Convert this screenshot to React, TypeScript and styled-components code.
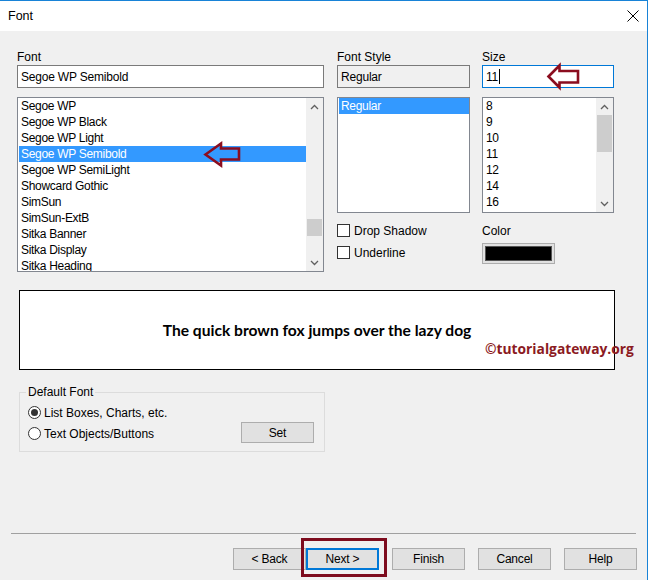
import React from "react";
import styled, { createGlobalStyle } from "styled-components";

const GlobalStyle = createGlobalStyle`
  html, body { margin: 0; padding: 0; background: #fff; }
  body { font-family: "Liberation Sans", Arial, sans-serif; font-size: 12px; color: #000; }
  * { box-sizing: border-box; }
`;

const Window = styled.div`
  width: 648px;
  height: 580px;
  border-top: 1px solid #1883d7;
  border-right: 1px solid #1883d7;
  background: #f0f0f0;
  display: flex;
  flex-direction: column;
  overflow: hidden;
`;

const TitleBar = styled.div`
  height: 30px;
  flex: none;
  background: #fff;
  display: flex;
  align-items: center;
  justify-content: space-between;
  padding: 0 8px 0 8px;
  font-size: 12.5px;
`;

const Main = styled.div`
  padding: 18px 0 0 17px;
  display: flex;
  flex-direction: column;
`;

const TopRow = styled.div`
  display: grid;
  grid-template-columns: 307px 133px 131px;
  column-gap: 13px;
  align-items: start;
`;

const Column = styled.div<{ $shift?: number }>`
  display: flex;
  flex-direction: column;
  margin-left: ${(p) => p.$shift ?? 0}px;
`;

const FieldLabel = styled.div<{ $gap?: number }>`
  height: 16px;
  line-height: 16px;
  margin-top: ${(p) => p.$gap ?? 0}px;
`;

const FieldWrap = styled.div`
  position: relative;
`;

const TextBox = styled.div<{ $focused?: boolean; $readOnly?: boolean }>`
  height: 23px;
  border: 1px solid ${(p) => (p.$focused ? "#0078d7" : "#7a7a7a")};
  background: ${(p) => (p.$readOnly ? "#f0f0f0" : "#fff")};
  padding: 0 3px;
  display: flex;
  align-items: center;
  letter-spacing: -0.2px;
`;

const Caret = styled.span`
  display: inline-block;
  width: 1px;
  height: 15px;
  background: #000;
  margin-left: 1px;
`;

const ListBox = styled.div<{ $height: number }>`
  position: relative;
  margin-top: 9px;
  height: ${(p) => p.$height}px;
  border: 1px solid #828790;
  background: #fff;
  display: flex;
`;

const ListItems = styled.div`
  flex: 1;
  padding-left: 1px;
  overflow: hidden;
`;

const ListItem = styled.div<{ $selected?: boolean }>`
  height: 16px;
  line-height: 16px;
  padding-left: 2px;
  white-space: nowrap;
  letter-spacing: -0.3px;
  background: ${(p) => (p.$selected ? "#3399ff" : "transparent")};
  color: ${(p) => (p.$selected ? "#fff" : "#000")};
`;

const ScrollBar = styled.div`
  width: 17px;
  flex: none;
  background: #f0f0f0;
  display: flex;
  flex-direction: column;
`;

const ScrollArrow = styled.div`
  height: 17px;
  flex: none;
  display: flex;
  align-items: center;
  justify-content: center;
`;

const Track = styled.div`
  flex: 1;
`;

const Thumb = styled.div<{ $top: number; $height: number }>`
  margin: ${(p) => p.$top}px 1px 0 1px;
  height: ${(p) => p.$height}px;
  background: #cdcdcd;
`;

const CheckRow = styled.div<{ $gap: number }>`
  display: flex;
  align-items: center;
  gap: 4px;
  height: 13px;
  margin-top: ${(p) => p.$gap}px;
`;

const CheckBox = styled.span`
  width: 13px;
  height: 13px;
  border: 1px solid #333;
  background: #fff;
  flex: none;
`;

const ColorSwatch = styled.div`
  margin-top: 4px;
  width: 73px;
  height: 21px;
  border: 1px solid #adadad;
  background: #e1e1e1;
  padding: 2px;
`;

const ColorFill = styled.div`
  width: 100%;
  height: 100%;
  background: #000;
  border: 1px solid #555;
`;

const Preview = styled.div`
  position: relative;
  margin: 18px 0 0 2px;
  width: 596px;
  height: 80px;
  border: 1px solid #000;
  background: #fff;
  display: flex;
  align-items: center;
  justify-content: center;
`;

const SampleText = styled.span`
  font-family: Lato, "Open Sans", sans-serif;
  font-weight: 700;
  font-size: 15.6px;
`;

const Watermark = styled.span`
  position: absolute;
  left: 465px;
  top: 48px;
  font-family: "Open Sans", sans-serif;
  font-weight: 700;
  font-size: 13.8px;
  color: #8b1a22;
  white-space: nowrap;
`;

const GroupBox = styled.fieldset`
  margin: 15px 0 0 2px;
  width: 306px;
  border: 1px solid #dcdcdc;
  padding: 0 10px 7px 8px;
`;

const GroupLegend = styled.legend`
  padding: 0 2px;
  margin-left: -2px;
  line-height: 14px;
`;

const GroupGrid = styled.div`
  margin-top: 3px;
  display: grid;
  grid-template-columns: 1fr 73px;
  grid-template-rows: 21px 21px;
`;

const RadioRow = styled.label<{ $row: number }>`
  grid-column: 1;
  grid-row: ${(p) => p.$row};
  display: flex;
  align-items: center;
  gap: 3px;
`;

const Radio = styled.span<{ $checked?: boolean }>`
  width: 13px;
  height: 13px;
  border-radius: 50%;
  border: 1px solid #333;
  background: #fff;
  display: flex;
  align-items: center;
  justify-content: center;
  flex: none;
  &::after {
    content: "";
    width: 7px;
    height: 7px;
    border-radius: 50%;
    background: ${(p) => (p.$checked ? "#333" : "transparent")};
  }
`;

const Button = styled.button<{ $primary?: boolean }>`
  width: 73px;
  height: 22px;
  padding: 0;
  font-family: "Liberation Sans", Arial, sans-serif;
  font-size: 12px;
  color: #000;
  background: #e1e1e1;
  border: ${(p) => (p.$primary ? "2px solid #0078d7" : "1px solid #adadad")};
  letter-spacing: -0.2px;
`;

const SetButton = styled(Button)`
  grid-column: 2;
  grid-row: 2;
  height: 21px;
  margin-top: -1px;
`;

const Footer = styled.div`
  margin-top: auto;
  display: flex;
  flex-direction: column;
`;

const Separator = styled.div`
  height: 1px;
  margin: 0 11px;
  background: #a0a0a0;
`;

const ButtonRow = styled.div`
  margin: 14px 0 10px;
  padding-right: 10px;
  display: flex;
  justify-content: flex-end;
  gap: 13px;
`;

const ButtonPair = styled.div`
  display: flex;
`;

const HighlightWrap = styled.div`
  position: relative;
  display: flex;
`;

const Highlight = styled.div`
  position: absolute;
  left: -5px;
  top: -10px;
  right: -8px;
  bottom: -7px;
  border: 3px solid #7d0c1e;
  pointer-events: none;
`;

const ArrowMark = styled.svg<{ $left: number; $top: number }>`
  position: absolute;
  left: ${(p) => p.$left}px;
  top: ${(p) => p.$top}px;
  overflow: visible;
`;

const Up = () => (
  <svg width="9" height="6" viewBox="0 0 9 6">
    <polyline points="1,5 4.5,1.5 8,5" fill="none" stroke="#606060" strokeWidth="1.3" />
  </svg>
);
const Down = () => (
  <svg width="9" height="6" viewBox="0 0 9 6">
    <polyline points="1,1 4.5,4.5 8,1" fill="none" stroke="#606060" strokeWidth="1.3" />
  </svg>
);

const Scroll = ({ top, height }: { top: number; height: number }) => (
  <ScrollBar>
    <ScrollArrow>
      <Up />
    </ScrollArrow>
    <Track>
      <Thumb $top={top} $height={height} />
    </Track>
    <ScrollArrow>
      <Down />
    </ScrollArrow>
  </ScrollBar>
);

const fonts = [
  "Segoe WP",
  "Segoe WP Black",
  "Segoe WP Light",
  "Segoe WP Semibold",
  "Segoe WP SemiLight",
  "Showcard Gothic",
  "SimSun",
  "SimSun-ExtB",
  "Sitka Banner",
  "Sitka Display",
  "Sitka Heading",
];
const sizes = ["8", "9", "10", "11", "12", "14", "16"];

export default function App() {
  return (
    <>
      <GlobalStyle />
      <Window>
        <TitleBar>
          <span>Font</span>
          <svg width="12" height="12" viewBox="0 0 12 12">
            <path d="M0.5 0.5 L11.5 11.5 M11.5 0.5 L0.5 11.5" stroke="#000" strokeWidth="1" />
          </svg>
        </TitleBar>
        <Main>
          <TopRow>
            <Column>
              <FieldLabel>Font</FieldLabel>
              <TextBox>Segoe WP Semibold</TextBox>
              <ListBox $height={175}>
                <ListItems>
                  {fonts.map((f) => (
                    <ListItem key={f} $selected={f === "Segoe WP Semibold"}>
                      {f}
                    </ListItem>
                  ))}
                </ListItems>
                <Scroll top={104} height={17} />
                <ArrowMark $left={186} $top={44} width="37" height="25" viewBox="0 0 37 25">
                  <polygon
                    points="1.5,12.5 17,1.5 17,6.5 35,6.5 35,17.5 17,17.5 17,23.5"
                    fill="none"
                    stroke="#8b0d1f"
                    strokeWidth="2.6"
                    strokeLinejoin="miter"
                  />
                </ArrowMark>
              </ListBox>
            </Column>
            <Column>
              <FieldLabel>Font Style</FieldLabel>
              <TextBox $readOnly>Regular</TextBox>
              <ListBox $height={116}>
                <ListItems>
                  <ListItem $selected>Regular</ListItem>
                </ListItems>
              </ListBox>
              <CheckRow $gap={11}>
                <CheckBox />
                <span>Drop Shadow</span>
              </CheckRow>
              <CheckRow $gap={9}>
                <CheckBox />
                <span>Underline</span>
              </CheckRow>
            </Column>
            <Column $shift={-1}>
              <FieldLabel>Size</FieldLabel>
              <FieldWrap>
                <TextBox $focused>
                  11
                  <Caret />
                </TextBox>
                <ArrowMark $left={65} $top={-1} width="33" height="25" viewBox="0 0 33 25">
                  <polygon
                    points="1.5,12.5 12.5,1.5 12.5,7 31,7 31,18.5 12.5,18.5 12.5,23.5"
                    fill="none"
                    stroke="#8b0d1f"
                    strokeWidth="2.6"
                  />
                </ArrowMark>
              </FieldWrap>
              <ListBox $height={116}>
                <ListItems>
                  {sizes.map((s) => (
                    <ListItem key={s}>{s}</ListItem>
                  ))}
                </ListItems>
                <Scroll top={0} height={37} />
              </ListBox>
              <FieldLabel $gap={10}>Color</FieldLabel>
              <ColorSwatch>
                <ColorFill />
              </ColorSwatch>
            </Column>
          </TopRow>
          <Preview>
            <SampleText>The quick brown fox jumps over the lazy dog</SampleText>
            <Watermark>©tutorialgateway.org</Watermark>
          </Preview>
          <GroupBox>
            <GroupLegend>Default Font</GroupLegend>
            <GroupGrid>
              <RadioRow $row={1}>
                <Radio $checked />
                <span>List Boxes, Charts, etc.</span>
              </RadioRow>
              <RadioRow $row={2}>
                <Radio />
                <span>Text Objects/Buttons</span>
              </RadioRow>
              <SetButton>Set</SetButton>
            </GroupGrid>
          </GroupBox>
        </Main>
        <Footer>
          <Separator />
          <ButtonRow>
            <ButtonPair>
              <Button>&lt; Back</Button>
              <HighlightWrap>
                <Button $primary>Next &gt;</Button>
                <Highlight />
              </HighlightWrap>
            </ButtonPair>
            <Button>Finish</Button>
            <Button>Cancel</Button>
            <Button>Help</Button>
          </ButtonRow>
        </Footer>
      </Window>
    </>
  );
}
